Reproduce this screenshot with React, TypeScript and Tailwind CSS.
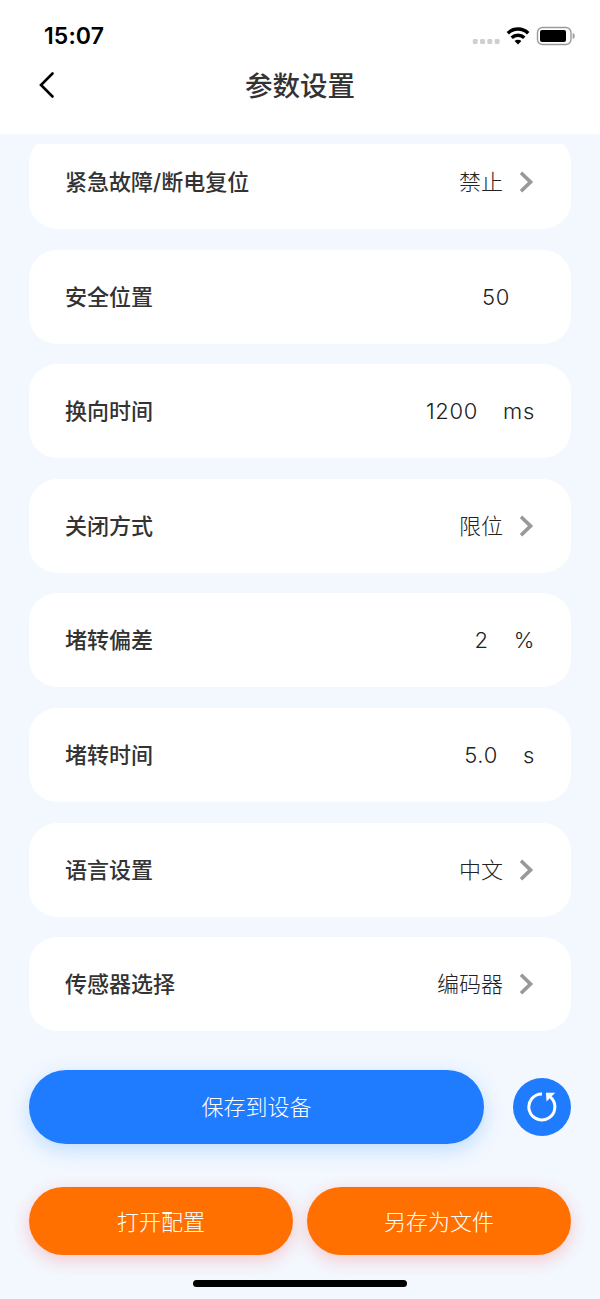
type Param = {
  label: string
  value: string
  unit?: string
  select?: boolean
}

const params: Param[] = [
  { label: '紧急故障/断电复位', value: '禁止', select: true },
  { label: '安全位置', value: '50', unit: '' },
  { label: '换向时间', value: '1200', unit: 'ms' },
  { label: '关闭方式', value: '限位', select: true },
  { label: '堵转偏差', value: '2', unit: '%' },
  { label: '堵转时间', value: '5.0', unit: 's' },
  { label: '语言设置', value: '中文', select: true },
  { label: '传感器选择', value: '编码器', select: true },
]

function StatusBar() {
  return (
    <div className="flex h-[50px] items-end justify-between pr-6 pl-11">
      <span className="font-['Inter',sans-serif] text-[23px] leading-7 font-semibold tracking-[0.1px] text-black">15:07</span>
      <div className="flex h-7 items-center">
        <svg width="28" height="18" viewBox="0 0 28 18" fill="#cfcfcf">
          <rect x="0.8" y="12" width="4.8" height="5" rx="1.2" />
          <rect x="8.1" y="12" width="4.8" height="5" rx="1.2" />
          <rect x="15.4" y="12" width="4.8" height="5" rx="1.2" />
          <rect x="22.7" y="12" width="4.8" height="5" rx="1.2" />
        </svg>
        <svg className="ml-1.5" width="24" height="18" viewBox="0 0 24 18" fill="none" stroke="#000" strokeWidth="3.4">
          <path d="M1.8 6.2a14.6 14.6 0 0 1 20.4 0" />
          <path d="M5.7 10.8a9 9 0 0 1 12.6 0" />
          <path d="M12 17.6l-3.4-3.5a4.8 4.8 0 0 1 6.8 0z" fill="#000" stroke="none" />
        </svg>
        <svg className="ml-1.5" width="40" height="20" viewBox="0 0 40 20">
          <rect x="1.5" y="1.5" width="33.5" height="17" rx="5" fill="none" stroke="#9a9a9a" strokeWidth="1.4" />
          <rect x="4" y="4" width="26" height="12" rx="2" fill="#000" />
          <path d="M36.7 7v6c1.6-.6 2-1.7 2-3s-.4-2.4-2-3z" fill="#9a9a9a" />
        </svg>
      </div>
    </div>
  )
}

function Chevron() {
  return (
    <svg className="ml-4 mr-px" width="15" height="22" viewBox="0 0 15 22" fill="none" stroke="#999" strokeWidth="3.7">
      <path d="M2 1.7L11.5 11 2 20.3" />
    </svg>
  )
}

function ParamCard({ label, value, unit, select }: Param) {
  return (
    <div className="flex h-[94px] shrink-0 items-center justify-between rounded-[28px] bg-white px-9">
      <span className="pt-px text-[22px] font-medium text-[#333]">{label}</span>
      <div className="flex items-center text-[22px] font-light text-[#222]">
        <span className={select ? 'pt-px' : 'pt-px tracking-[0.7px]'}>{value}</span>
        {select ? <Chevron /> : <span className="ml-[25px] pt-px tracking-[0.7px]">{unit}</span>}
      </div>
    </div>
  )
}

export default function App() {
  return (
    <div className="flex h-[1299px] w-[600px] flex-col overflow-hidden bg-[#f3f8ff] font-['Inter','Noto_Sans_CJK_SC',sans-serif]">
      <header className="h-[134px] shrink-0 bg-white">
        <StatusBar />
        <div className="grid h-[70px] grid-cols-[1fr_auto_1fr] items-center px-[38px]">
          <svg width="18" height="28" viewBox="0 0 18 28" fill="none" stroke="#000" strokeWidth="2.6" strokeLinecap="round">
            <path d="M14.5 2.5L3 14l11.5 11.5" />
          </svg>
          <h1 className="pt-[3px] text-[27.5px] font-medium text-[#333]">参数设置</h1>
        </div>
      </header>

      {/* Scrolled list, the first card is partly under the top edge */}
      <main className="mt-[10px] h-[900px] shrink-0 overflow-hidden px-[29px]">
        <div className="-mt-[9px] flex flex-col gap-[20.6px]">
          {params.map(p => <ParamCard key={p.label} {...p} />)}
        </div>
      </main>

      <footer className="flex flex-col px-[29px] pt-[26px]">
        <div className="flex items-center justify-between">
          <button className="h-[74px] w-[455px] rounded-full bg-[#1f7cff] pt-px text-[22px] font-light text-white shadow-[0_6px_20px_rgba(31,140,255,0.25)]">
            保存到设备
          </button>
          <button className="flex size-[58px] items-center justify-center rounded-full bg-[#1f7cff]">
            <svg width="32" height="32" viewBox="0 0 32 32" fill="none">
              <path d="M16 2.9A13 13 0 1 0 24.5 6.2" stroke="#fff" strokeWidth="3" />
              <path d="M20 1.7h9.2L20.5 10.4z" fill="#fff" />
            </svg>
          </button>
        </div>
        <div className="mt-[43px] flex gap-3.5">
          {['打开配置', '另存为文件'].map(text => (
            <button key={text} className="h-[68px] flex-1 rounded-full bg-[#ff7000] pt-0.5 text-[22px] font-light text-white shadow-[0_5px_18px_rgba(255,50,50,0.25)]">
              {text}
            </button>
          ))}
        </div>
        <div className="mt-[25px] h-[7px] w-[214px] self-center rounded-full bg-black" />
      </footer>
    </div>
  )
}
